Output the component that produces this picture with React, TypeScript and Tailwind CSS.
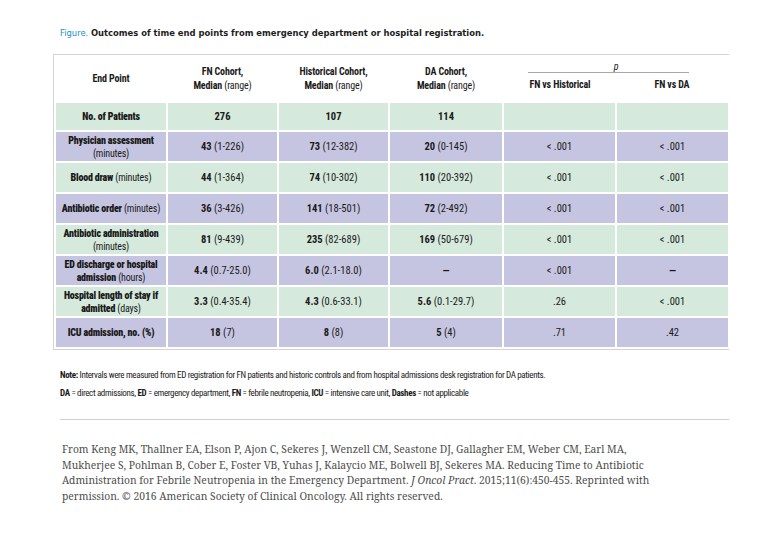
import type { ReactNode } from "react";

type Row = {
  label: ReactNode;
  fn: ReactNode;
  hist: ReactNode;
  da: ReactNode;
  pHist: ReactNode;
  pDa: ReactNode;
  tone: "green" | "purple";
};

const v = (main: string, range?: string) => (
  <>
    <span className="font-bold">{main}</span>
    {range ? <span className="font-normal"> {range}</span> : null}
  </>
);

const rows: Row[] = [
  { label: <b>No. of Patients</b>, fn: v("276"), hist: v("107"), da: v("114"), pHist: "", pDa: "", tone: "green" },
  {
    label: (
      <>
        <b>Physician assessment</b>
        <br />
        <span className="font-normal">(minutes)</span>
      </>
    ),
    fn: v("43", "(1-226)"),
    hist: v("73", "(12-382)"),
    da: v("20", "(0-145)"),
    pHist: "< .001",
    pDa: "< .001",
    tone: "purple",
  },
  {
    label: (
      <>
        <b>Blood draw</b> <span className="font-normal">(minutes)</span>
      </>
    ),
    fn: v("44", "(1-364)"),
    hist: v("74", "(10-302)"),
    da: v("110", "(20-392)"),
    pHist: "< .001",
    pDa: "< .001",
    tone: "green",
  },
  {
    label: (
      <>
        <b>Antibiotic order</b> <span className="font-normal">(minutes)</span>
      </>
    ),
    fn: v("36", "(3-426)"),
    hist: v("141", "(18-501)"),
    da: v("72", "(2-492)"),
    pHist: "< .001",
    pDa: "< .001",
    tone: "purple",
  },
  {
    label: (
      <>
        <b>Antibiotic administration</b>
        <br />
        <span className="font-normal">(minutes)</span>
      </>
    ),
    fn: v("81", "(9-439)"),
    hist: v("235", "(82-689)"),
    da: v("169", "(50-679)"),
    pHist: "< .001",
    pDa: "< .001",
    tone: "green",
  },
  {
    label: (
      <>
        <b>ED discharge or hospital</b>
        <br />
        <b>admission</b> <span className="font-normal">(hours)</span>
      </>
    ),
    fn: v("4.4", "(0.7-25.0)"),
    hist: v("6.0", "(2.1-18.0)"),
    da: v("—"),
    pHist: "< .001",
    pDa: <b>—</b>,
    tone: "purple",
  },
  {
    label: (
      <>
        <b>Hospital length of stay if</b>
        <br />
        <b>admitted</b> <span className="font-normal">(days)</span>
      </>
    ),
    fn: v("3.3", "(0.4-35.4)"),
    hist: v("4.3", "(0.6-33.1)"),
    da: v("5.6", "(0.1-29.7)"),
    pHist: ".26",
    pDa: "< .001",
    tone: "green",
  },
  {
    label: <b>ICU admission, no. (%)</b>,
    fn: v("18", "(7)"),
    hist: v("8", "(8)"),
    da: v("5", "(4)"),
    pHist: ".71",
    pDa: ".42",
    tone: "purple",
  },
];

const cond = "font-['Roboto_Condensed','DejaVu_Sans_Condensed',sans-serif]";

function Cell({ children, className = "" }: { children: ReactNode; className?: string }) {
  return (
    <td className={`border-2 border-white text-center align-middle leading-[13px] px-0 ${className}`}>
      {children}
    </td>
  );
}

function HeadCol({ title }: { title: string }) {
  return (
    <th className="border-x-2 border-white font-bold text-center leading-[14px] pt-[2px] tracking-[-0.15px]">
      {title}
      <br />
      Median <span className="font-normal">(range)</span>
    </th>
  );
}

export default function App() {
  return (
    <div className="w-[780px] h-[534px] bg-white text-[#1c1c1c] pt-[26px]">
      <p className="pl-[60px] text-[9.35px] font-['DejaVu_Sans_Condensed','Liberation_Sans',sans-serif] leading-[14px]">
        <span className="text-[#2191c6]">Figure.</span>{" "}
        <span className="font-semibold">
          Outcomes of time end points from emergency department or hospital registration.
        </span>
      </p>

      <div className={`ml-[53px] mt-[14px] w-[676px] border border-[#d4d4d4] ${cond} text-[10px] text-[#1a1a1a]`}>
        <table className="w-full table-fixed border-collapse">
          <colgroup>
            <col className="w-[112px]" />
            <col className="w-[111px]" />
            <col className="w-[111px]" />
            <col className="w-[114px]" />
            <col className="w-[113px]" />
            <col className="w-[113px]" />
          </colgroup>
          <thead>
            <tr className="h-[47px] bg-white">
              <th className="border-x-2 border-white font-bold text-center tracking-[-0.15px]">End Point</th>
              <HeadCol title="FN Cohort," />
              <HeadCol title="Historical Cohort," />
              <HeadCol title="DA Cohort," />
              <th colSpan={2} className="border-x-2 border-white font-bold align-top pt-[7px] tracking-[-0.15px]">
                <div className="text-center italic font-normal leading-[10px]">p</div>
                <div className="ml-[24px] mr-[39px] border-b border-[#a8a8a8]" />
                <div className="grid grid-cols-2 mt-[5px] leading-[13px]">
                  <span>FN vs Historical</span>
                  <span>FN vs DA</span>
                </div>
              </th>
            </tr>
          </thead>
          <tbody>
            {rows.map((r, i) => (
              <tr
                key={i}
                className={`${i === 0 ? "h-[29px]" : "h-[31px]"} ${
                  r.tone === "green" ? "bg-[#d5e9dc]" : "bg-[#c6c5e1]"
                }`}
              >
                <Cell className="font-bold tracking-[-0.2px]">{r.label}</Cell>
                <Cell className="text-[10.5px]">{r.fn}</Cell>
                <Cell className="text-[10.5px]">{r.hist}</Cell>
                <Cell className="text-[10.5px]">{r.da}</Cell>
                <Cell className="text-[10.5px]">{r.pHist}</Cell>
                <Cell className="text-[10.5px]">{r.pDa}</Cell>
              </tr>
            ))}
          </tbody>
        </table>
      </div>

      <div className={`pl-[60px] mt-[16px] ${cond} text-[9px] leading-[18px] tracking-[-0.35px] text-[#1a1a1a]`}>
        <p>
          <b>Note:</b> Intervals were measured from ED registration for FN patients and historic controls and from
          hospital admissions desk registration for DA patients.
        </p>
        <p>
          <b>DA</b> = direct admissions, <b>ED</b> = emergency department, <b>FN</b> = febrile neutropenia,{" "}
          <b>ICU</b> = intensive care unit, <b>Dashes</b> = not applicable
        </p>
      </div>

      <div className="ml-[60px] mt-[17px] w-[669px] border-t border-[#cfcfcf]" />

      <p className="pl-[62px] mt-[22px] text-[10.3px] leading-[15.5px] text-[#4d4d4d] font-['Noto_Serif',serif] whitespace-nowrap">
        From Keng MK, Thallner EA, Elson P, Ajon C, Sekeres J, Wenzell CM, Seastone DJ, Gallagher EM, Weber CM, Earl MA,
        <br />
        Mukherjee S, Pohlman B, Cober E, Foster VB, Yuhas J, Kalaycio ME, Bolwell BJ, Sekeres MA. Reducing Time to Antibiotic
        <br />
        Administration for Febrile Neutropenia in the Emergency Department. <i>J Oncol Pract</i>. 2015;11(6):450-455. Reprinted with
        <br />
        permission. © 2016 American Society of Clinical Oncology. All rights reserved.
      </p>
    </div>
  );
}
